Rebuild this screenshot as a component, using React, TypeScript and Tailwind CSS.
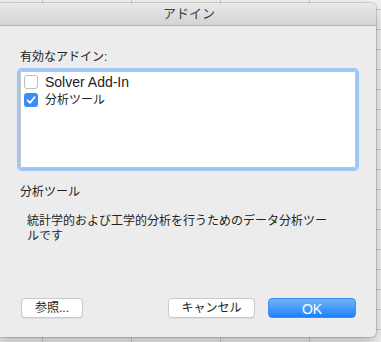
import React from 'react';

const font = "font-['Liberation_Sans','Noto_Sans_CJK_JP',sans-serif]";

function Checkbox({ checked }: { checked: boolean }) {
  if (checked) {
    return (
      <span className="flex h-[14px] w-[14px] shrink-0 items-center justify-center rounded-[3px] bg-[#3a8cf6]">
        <svg width="12" height="12" viewBox="0 0 12 12" fill="none">
          <path d="M2.6 6.4 L5 8.9 L9.6 3.2" stroke="white" strokeWidth="1.7" strokeLinecap="round" strokeLinejoin="round" />
        </svg>
      </span>
    );
  }
  return <span className="h-[14px] w-[14px] shrink-0 rounded-[3px] border border-[#bcbcbc] bg-white" />;
}

const addins = [
  { id: 'solver', label: 'Solver Add-In', checked: false, cls: "font-['Liberation_Sans',Arial,sans-serif] text-[14px]" },
  { id: 'analysis', label: '分析ツール', checked: true, cls: 'text-[12px]' },
];

export default function App() {
  return (
    <div className={`relative h-[342px] w-[381px] overflow-hidden bg-[#f4f4f4] ${font}`}>
      {/* spreadsheet behind the dialog */}
      <div className="absolute inset-0 bg-[linear-gradient(to_bottom,#cfcfcf_1px,transparent_1px),linear-gradient(to_right,#cfcfcf_1px,transparent_1px)] bg-[length:100%_20px,89px_100%] bg-[position:0_9px,42px_0]" />

      {/* Dialog */}
      <div className="absolute left-[-4px] top-[3px] flex h-[334px] w-[380px] flex-col overflow-hidden rounded-[5px] bg-[#ececec] shadow-[0_0_0_1px_rgba(0,0,0,0.13),0_6px_16px_rgba(0,0,0,0.28)]">
        {/* Title bar */}
        <div className="flex h-[23px] shrink-0 items-center justify-center border-b border-[#b3b3b3] bg-gradient-to-b from-[#ebeaeb] to-[#d4d3d4] pl-[6px] text-[13px] text-[#404040]">
          アドイン
        </div>

        {/* Body */}
        <div className="flex flex-1 flex-col pl-[24px] pr-[20px] pt-[23px] pb-[19px] text-[#222222]">
          <div className="text-[12px] leading-[16px]">有効なアドイン:</div>

          <div className="mt-[6px] h-[97px] rounded-[2px] border border-[#c4c4c4] bg-white pl-[3px] pt-[1px] outline outline-[3px] outline-[#9ec5f4]">
            {addins.map((a) => (
              <div key={a.id} className="flex h-[18px] items-center gap-[7px]">
                <Checkbox checked={a.checked} />
                <span className={`leading-[18px] ${a.cls}`}>{a.label}</span>
              </div>
            ))}
          </div>

          <div className="mt-[16px] text-[12px] leading-[16px]">分析ツール</div>
          <p className="mt-[14px] w-[312px] pl-[7px] text-[12px] leading-[15px]">
            統計学的および工学的分析を行うためのデータ分析ツールです
          </p>

          {/* Buttons */}
          <div className="mt-auto flex items-center gap-[13px] pl-[1px]">
            <button className="h-[20px] w-[62px] rounded-[4px] border border-[#c9c9c9] bg-white text-[12px] text-[#262626] shadow-[0_1px_0_rgba(0,0,0,0.06)]">
              参照...
            </button>
            <div className="flex-1" />
            <button className="h-[20px] w-[87px] rounded-[4px] border border-[#c9c9c9] bg-white text-[12px] text-[#262626] shadow-[0_1px_0_rgba(0,0,0,0.06)]">
              キャンセル
            </button>
            <button className="h-[20px] w-[88px] rounded-[4px] border border-[#3f8ef5] bg-gradient-to-b from-[#6db3fa] to-[#1a80fb] text-[14px] text-white">
              OK
            </button>
          </div>
        </div>
      </div>
    </div>
  );
}
